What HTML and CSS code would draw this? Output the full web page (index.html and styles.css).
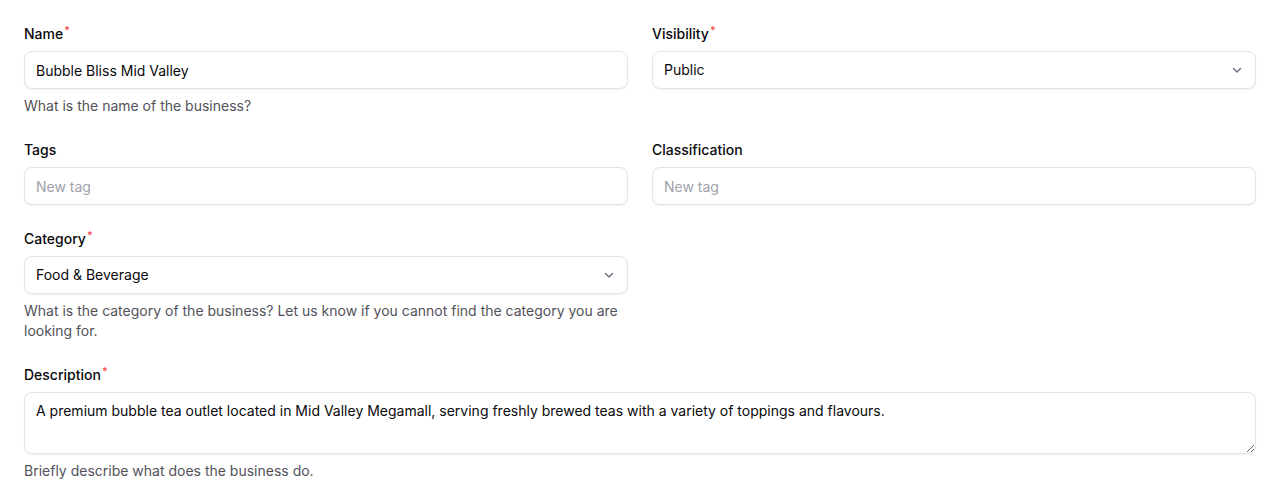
FILE: index.html
```html
<!DOCTYPE html>
<html>
<head>
<meta charset="utf-8">
<link rel="stylesheet" href="styles.css">
</head>
<body>
<form class="form">
  <div class="field">
    <label class="label">Name<span class="req">*</span></label>
    <input class="input" type="text" value="Bubble Bliss Mid Valley">
    <p class="help">What is the name of the business?</p>
  </div>
  <div class="field">
    <label class="label">Visibility<span class="req">*</span></label>
    <div class="select">
      <span>Public</span>
      <svg class="chev" width="12" height="12" viewBox="0 0 12 12"><path d="M2.5 4.5 6 8l3.5-3.5" fill="none" stroke="#6b7280" stroke-width="1.5" stroke-linecap="round" stroke-linejoin="round"/></svg>
    </div>
  </div>
  <div class="field">
    <label class="label">Tags</label>
    <input class="input" type="text" placeholder="New tag">
  </div>
  <div class="field">
    <label class="label">Classification</label>
    <input class="input" type="text" placeholder="New tag">
  </div>
  <div class="field">
    <label class="label">Category<span class="req">*</span></label>
    <div class="select">
      <span>Food &amp; Beverage</span>
      <svg class="chev" width="12" height="12" viewBox="0 0 12 12"><path d="M2.5 4.5 6 8l3.5-3.5" fill="none" stroke="#6b7280" stroke-width="1.5" stroke-linecap="round" stroke-linejoin="round"/></svg>
    </div>
    <p class="help">What is the category of the business? Let us know if you cannot find the category you are looking for.</p>
  </div>
  <div class="field"></div>
  <div class="field full">
    <label class="label">Description<span class="req">*</span></label>
    <textarea class="textarea">A premium bubble tea outlet located in Mid Valley Megamall, serving freshly brewed teas with a variety of toppings and flavours.</textarea>
    <p class="help">Briefly describe what does the business do.</p>
  </div>
</form>
</body>
</html>
```

FILE: styles.css
```css
* { box-sizing: border-box; }
html, body { margin: 0; background: #fff; }
body {
  font-family: Inter, "Noto Sans", sans-serif;
  font-size: 14px;
  line-height: 20px;
  color: #09090b;
  padding: 24px;
}
.form {
  display: grid;
  grid-template-columns: 1fr 1fr;
  column-gap: 24px;
  row-gap: 24px;
}
.field { display: flex; flex-direction: column; min-width: 0; }
.full { grid-column: 1 / -1; }
.label {
  font-weight: 500;
  font-size: 14px;
  line-height: 20px;
  color: #09090b;
  margin-bottom: 7px;
}
.req { color: #ef4444; font-size: 11px; vertical-align: 5px; margin-left: 1px; line-height: 0; }
.input, .select, .textarea {
  width: 100%;
  font: inherit;
  color: #09090b;
  background: #fff;
  border: 1px solid #e4e4e7;
  border-radius: 8px;
  box-shadow: 0 1px 2px rgba(0,0,0,0.06);
  padding: 8px 11px;
  height: 38px;
  outline: none;
}
.input::placeholder { color: #a1a1aa; }
.select {
  display: flex;
  align-items: center;
  justify-content: space-between;
  padding-right: 12px;
}
.chev { display: block; }
.textarea {
  height: 62px;
  resize: vertical;
  display: block;
  padding: 8px 11px;
}
.help {
  margin: 7px 0 0;
  color: #52525b;
  font-size: 14px;
  line-height: 20px;
}
```
